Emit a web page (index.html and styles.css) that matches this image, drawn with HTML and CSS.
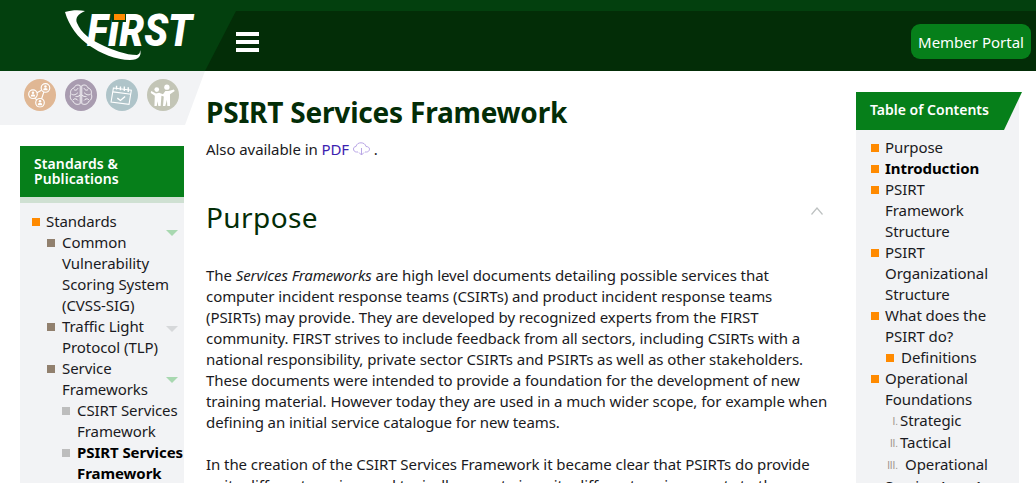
FILE: index.html
```html
<!DOCTYPE html>
<html lang="en">
<head>
  <meta charset="UTF-8">
  <title>PSIRT Services Framework</title>
  <link rel="stylesheet" href="styles.css">
</head>
<body>

<div class="header">
  <div class="logo-area">
    <svg class="logo" width="132" height="56" viewBox="0 0 132 56">
      <path d="M1 3 C8 1 15 1 21 2 C14 5 11 9 13 14 C17 24 27 31 36 35 C48 41 62 46 73 46 C76 45 76 43 76 41 C78 46 75 51 66 51 C52 51 36 44 26 37 C14 29 5 17 1 3 Z" fill="#fff"/>
      <text class="logo-text" x="23" y="37" textLength="105" lengthAdjust="spacingAndGlyphs">FIRST</text>
      <rect x="48" y="4" width="14" height="9" fill="#03400e"/>
      <rect x="50" y="5" width="11" height="6" fill="#ff8a00"/>
    </svg>
  </div>
  <div class="header-bar">
    <div class="burger"><div></div><div></div><div></div></div>
    <div class="portal-btn">Member Portal</div>
  </div>
</div>

<div class="page">
  <div class="left-col">
    <div class="icon-band">
      <div class="round-icon peach">
        <svg width="32" height="32" viewBox="0 0 32 32" fill="none" stroke="#fff" stroke-width="1.5">
          <circle cx="7" cy="15" r="5.5"/><circle cx="23" cy="7" r="5.5"/><circle cx="16" cy="26" r="5.5"/>
          <path d="M12 13 L18 10 M9 20 L12 22 M21 12 L18 21"/>
          <path d="M4 18 a3 3 0 0 1 6 0 Z M20 10 a3 3 0 0 1 6 0 Z M13 29 a3 3 0 0 1 6 0 Z" fill="#fff" stroke="none"/>
          <circle cx="7" cy="13" r="1.6" fill="#fff" stroke="none"/><circle cx="23" cy="5" r="1.6" fill="#fff" stroke="none"/><circle cx="16" cy="24" r="1.6" fill="#fff" stroke="none"/>
        </svg>
      </div>
      <div class="round-icon mauve">
        <svg width="32" height="32" viewBox="0 0 32 32" fill="none" stroke="#fff" stroke-width="1.1">
          <path d="M15 4 C11 2 8 4 7 7 C3 8 2 12 3 15 C1 18 3 23 6 24 C7 28 12 29 15 27 Z"/>
          <path d="M17 4 C21 2 24 4 25 7 C29 8 30 12 29 15 C31 18 29 23 26 24 C25 28 20 29 17 27 Z"/>
          <path d="M7 9 C9 11 12 9 12 7 M4 15 C7 17 10 15 12 13 M6 22 C8 20 11 21 12 23 M9 18 C11 18 13 18 15 16 M25 9 C23 11 20 9 20 7 M28 15 C25 17 22 15 20 13 M26 22 C24 20 21 21 20 23 M23 18 C21 18 19 18 17 16"/>
        </svg>
      </div>
      <div class="round-icon slate">
        <svg width="32" height="32" viewBox="0 0 32 32" fill="none" stroke="#fff" stroke-width="1.4">
          <path d="M5 7 L28 10 L25 28 L2 25 Z"/>
          <path d="M4.5 12 L27.5 15"/>
          <path d="M9 4 V9 M14 5 V10 M19 5 V11 M24 6 V12" stroke-width="1.8"/>
          <path d="M10 20 L14 23 L20 18" stroke-width="1.8"/>
        </svg>
      </div>
      <div class="round-icon sage">
        <svg width="32" height="32" viewBox="0 0 32 32" fill="#fff">
          <circle cx="8" cy="9" r="3"/><circle cx="21" cy="6" r="3.4"/>
          <path d="M1 11 L7 14 L11 13 L16 15 L19 11 L23 11 L30 9 L31 11 L25 15 L25 30 L21.5 30 L21 22 L19 30 L16 30 L17 18 L14 17 L13 30 L10 30 L9 24 L8 30 L5 30 L5.5 17 L0 13 Z"/>
        </svg>
      </div>
    </div>

    <div class="side-box">
      <div class="side-title">Standards &amp;<br>Publications</div>
      <div class="side-rule"></div>
      <div class="side-list">
        <div class="item lvl1"><span class="mark orange"></span>Standards<span class="caret green caret-low"></span></div>
        <div class="item lvl2"><span class="mark brown"></span>Common Vulnerability Scoring System (CVSS-SIG)</div>
        <div class="item lvl2"><span class="mark brown"></span>Traffic Light Protocol (TLP)<span class="caret grey"></span></div>
        <div class="item lvl2"><span class="mark brown"></span>Service Frameworks<span class="caret green caret-low"></span></div>
        <div class="item lvl3"><span class="mark silver"></span>CSIRT Services Framework</div>
        <div class="item lvl3 current"><span class="mark silver"></span>PSIRT Services Framework</div>
      </div>
    </div>
  </div>

  <div class="content">
    <h1>PSIRT Services Framework</h1>
    <p class="also">Also available in <a class="pdf">PDF</a>
      <svg class="cloud" width="17" height="14" viewBox="0 0 17 14" fill="none" stroke="#b9a6e6" stroke-width="1">
        <path d="M5 10 H3.5 C1.5 10 .5 8.5 .5 7 C.5 5.5 1.5 4.5 3 4.5 C3.5 2 5.5 .8 8 .8 C10.5 .8 12.5 2.2 13 4.5 C15 4.5 16.5 5.5 16.5 7.2 C16.5 8.8 15 10 13.5 10 H12"/>
        <path d="M8.5 6 V13 M6 10.5 L8.5 13 L11 10.5"/>
      </svg> .</p>
    <div class="section-head">
      <h2>Purpose</h2>
      <svg class="chevron" width="12" height="8" viewBox="0 0 12 8" fill="none" stroke="#bdc1c1" stroke-width="1.2"><path d="M.5 7.5 L6 1 L11.5 7.5"/></svg>
    </div>
    <p class="para">The <em>Services Frameworks</em> are high level documents detailing possible services that computer incident response teams (CSIRTs) and product incident response teams (PSIRTs) may provide. They are developed by recognized experts from the FIRST community. FIRST strives to include feedback from all sectors, including CSIRTs with a national responsibility, private sector CSIRTs and PSIRTs as well as other stakeholders. These documents were intended to provide a foundation for the development of new training material. However today they are used in a much wider scope, for example when defining an initial service catalogue for new teams.</p>
    <p class="para">In the creation of the CSIRT Services Framework it became clear that PSIRTs do provide quite different services and typically operate in quite different environments to the</p>
  </div>

  <div class="toc-col">
    <div class="toc-title">Table of Contents</div>
    <div class="toc-list">
      <div class="item lvl1"><span class="mark orange"></span>Purpose</div>
      <div class="item lvl1 current"><span class="mark orange"></span>Introduction</div>
      <div class="item lvl1"><span class="mark orange"></span>PSIRT Framework Structure</div>
      <div class="item lvl1"><span class="mark orange"></span>PSIRT Organizational Structure</div>
      <div class="item lvl1"><span class="mark orange"></span>What does the PSIRT do?</div>
      <div class="item lvl2"><span class="mark orange"></span>Definitions</div>
      <div class="item lvl1"><span class="mark orange"></span>Operational Foundations</div>
      <div class="item roman"><span class="num">I.</span>Strategic</div>
      <div class="item roman"><span class="num">II.</span>Tactical</div>
      <div class="item roman wide"><span class="num">III.</span>Operational</div>
      <div class="item lvl1"><span class="mark orange"></span>Service Area 1</div>
    </div>
  </div>
</div>

</body>
</html>
```
FILE: styles.css
```css
html, body {
  height: 483px;
  overflow: hidden;
}

body {
  margin: 0;
  background-color: #fff;
  font-family: "Noto Sans", sans-serif;
  font-size: 15px;
  line-height: 21px;
  letter-spacing: -0.07px;
  color: #1a1a22;
}

.header {
  display: flex;
  height: 71px;
  background-color: #03400e;
}

.logo-area {
  width: 205px;
  flex-shrink: 0;
  padding: 9px 0 0 64px;
  box-sizing: border-box;
}

.logo {
  display: block;
}

.logo-text {
  font-family: Roboto, sans-serif;
  font-size: 45px;
  font-weight: 900;
  font-style: italic;
  fill: #fff;
}

.header-bar {
  flex: 1;
  margin-top: 11px;
  display: flex;
  align-items: center;
  justify-content: space-between;
  padding: 1px 5px 0 31px;
  background-color: #032d07;
  clip-path: polygon(31px 0, 100% 0, 100% 100%, 0 100%);
}

.burger {
  width: 23px;
}

.burger div {
  height: 4px;
  margin-bottom: 4px;
  background-color: #fff;
}

.burger div:last-child {
  margin-bottom: 0;
}

.portal-btn {
  width: 120px;
  height: 35px;
  line-height: 37px;
  text-align: center;
  letter-spacing: 0;
  background-color: #067f1a;
  border-radius: 9px;
  color: #fff;
}

.page {
  display: flex;
}

.left-col {
  width: 206px;
  flex-shrink: 0;
}

.icon-band {
  display: flex;
  gap: 9px;
  height: 54px;
  padding: 8px 0 0 24px;
  box-sizing: border-box;
  background-color: #f2f3f5;
  clip-path: polygon(0 0, 205px 0, 185px 100%, 0 100%);
}

.round-icon {
  width: 32px;
  height: 32px;
  border-radius: 50%;
}

.round-icon svg {
  display: block;
  transform: scale(0.78);
}

.peach { background-color: #e0b794; }
.mauve { background-color: #a99cb0; }
.slate { background-color: #afc4c9; }
.sage { background-color: #c3c5b6; }

.side-box {
  width: 164px;
  margin: 21px 0 0 20px;
  background-color: #f2f3f5;
}

.side-title {
  padding: 10px 14px 12px;
  height: 29px;
  background-color: #067f1a;
  color: #fff;
  font-size: 14px;
  font-weight: 600;
  line-height: 15px;
  letter-spacing: 0.1px;
}

.side-rule {
  height: 6px;
  background-color: #cfe0d2;
}

.side-list {
  padding: 8px 0 0 12px;
}

.item {
  position: relative;
}

.mark {
  position: absolute;
  width: 8px;
  height: 8px;
  top: 7px;
  left: -15px;
}

.orange { background-color: #ff8a00; }
.brown { background-color: #91806e; }
.silver { background-color: #bdbdbd; }

.side-list .lvl1 { padding-left: 14px; }
.side-list .lvl2 { padding: 0 10px 0 30px; }
.side-list .lvl3 { padding-left: 45px; margin-right: -8px; }
.side-list .lvl1 .mark { left: 0; }
.side-list .lvl2 .mark { left: 15px; }
.side-list .lvl3 .mark { left: 30px; }

.caret {
  position: absolute;
  right: 6px;
  top: 10px;
  border-left: 6px solid transparent;
  border-right: 6px solid transparent;
  border-top: 6px solid #a8d8b0;
}

.caret.grey {
  border-top-color: #d6d8da;
}

.caret-low {
  top: 19px;
}

.current {
  font-weight: 700;
  color: #000;
}

.content {
  width: 625px;
  flex-shrink: 0;
}

h1 {
  margin: 23px 0 0;
  font-size: 28px;
  line-height: 36px;
  font-weight: 700;
  letter-spacing: -0.2px;
  color: #032d07;
}

.also {
  margin: 9px 0 0;
}

.pdf {
  color: #3b22b0;
}

.cloud {
  vertical-align: -1px;
}

.section-head {
  display: flex;
  justify-content: space-between;
  align-items: flex-start;
  margin-top: 38px;
  padding-right: 8px;
}

h2 {
  margin: 0;
  font-size: 28px;
  line-height: 38px;
  font-weight: 400;
  letter-spacing: 0.4px;
  color: #032d07;
}

.chevron {
  margin-top: 9px;
}

.para {
  margin: 29px 2px 0 0;
}

.para + .para {
  margin-top: 21px;
}

.toc-col {
  width: 163px;
  margin: 21px 0 0 25px;
  background-color: #f2f3f5;
}

.toc-title {
  width: 166px;
  height: 38px;
  padding-left: 14px;
  box-sizing: border-box;
  line-height: 36px;
  letter-spacing: 0;
  background-color: #067f1a;
  color: #fff;
  font-size: 14px;
  font-weight: 600;
  clip-path: polygon(0 0, 100% 0, 148px 100%, 0 100%);
}

.toc-list {
  padding: 7px 20px 0 0;
}

.toc-list .lvl1 { padding-left: 29px; }
.toc-list .lvl2 { padding-left: 45px; }
.toc-list .lvl1 .mark { left: 15px; }
.toc-list .lvl2 .mark { left: 30px; }

.roman {
  padding-left: 44px;
  margin-bottom: 1px;
}

.roman .num {
  position: absolute;
  right: calc(100% - 42px);
  top: 1px;
  font-size: 10px;
  font-family: "Liberation Sans", sans-serif;
  color: #a0948a;
}

.roman.wide {
  padding-left: 49px;
}
```
